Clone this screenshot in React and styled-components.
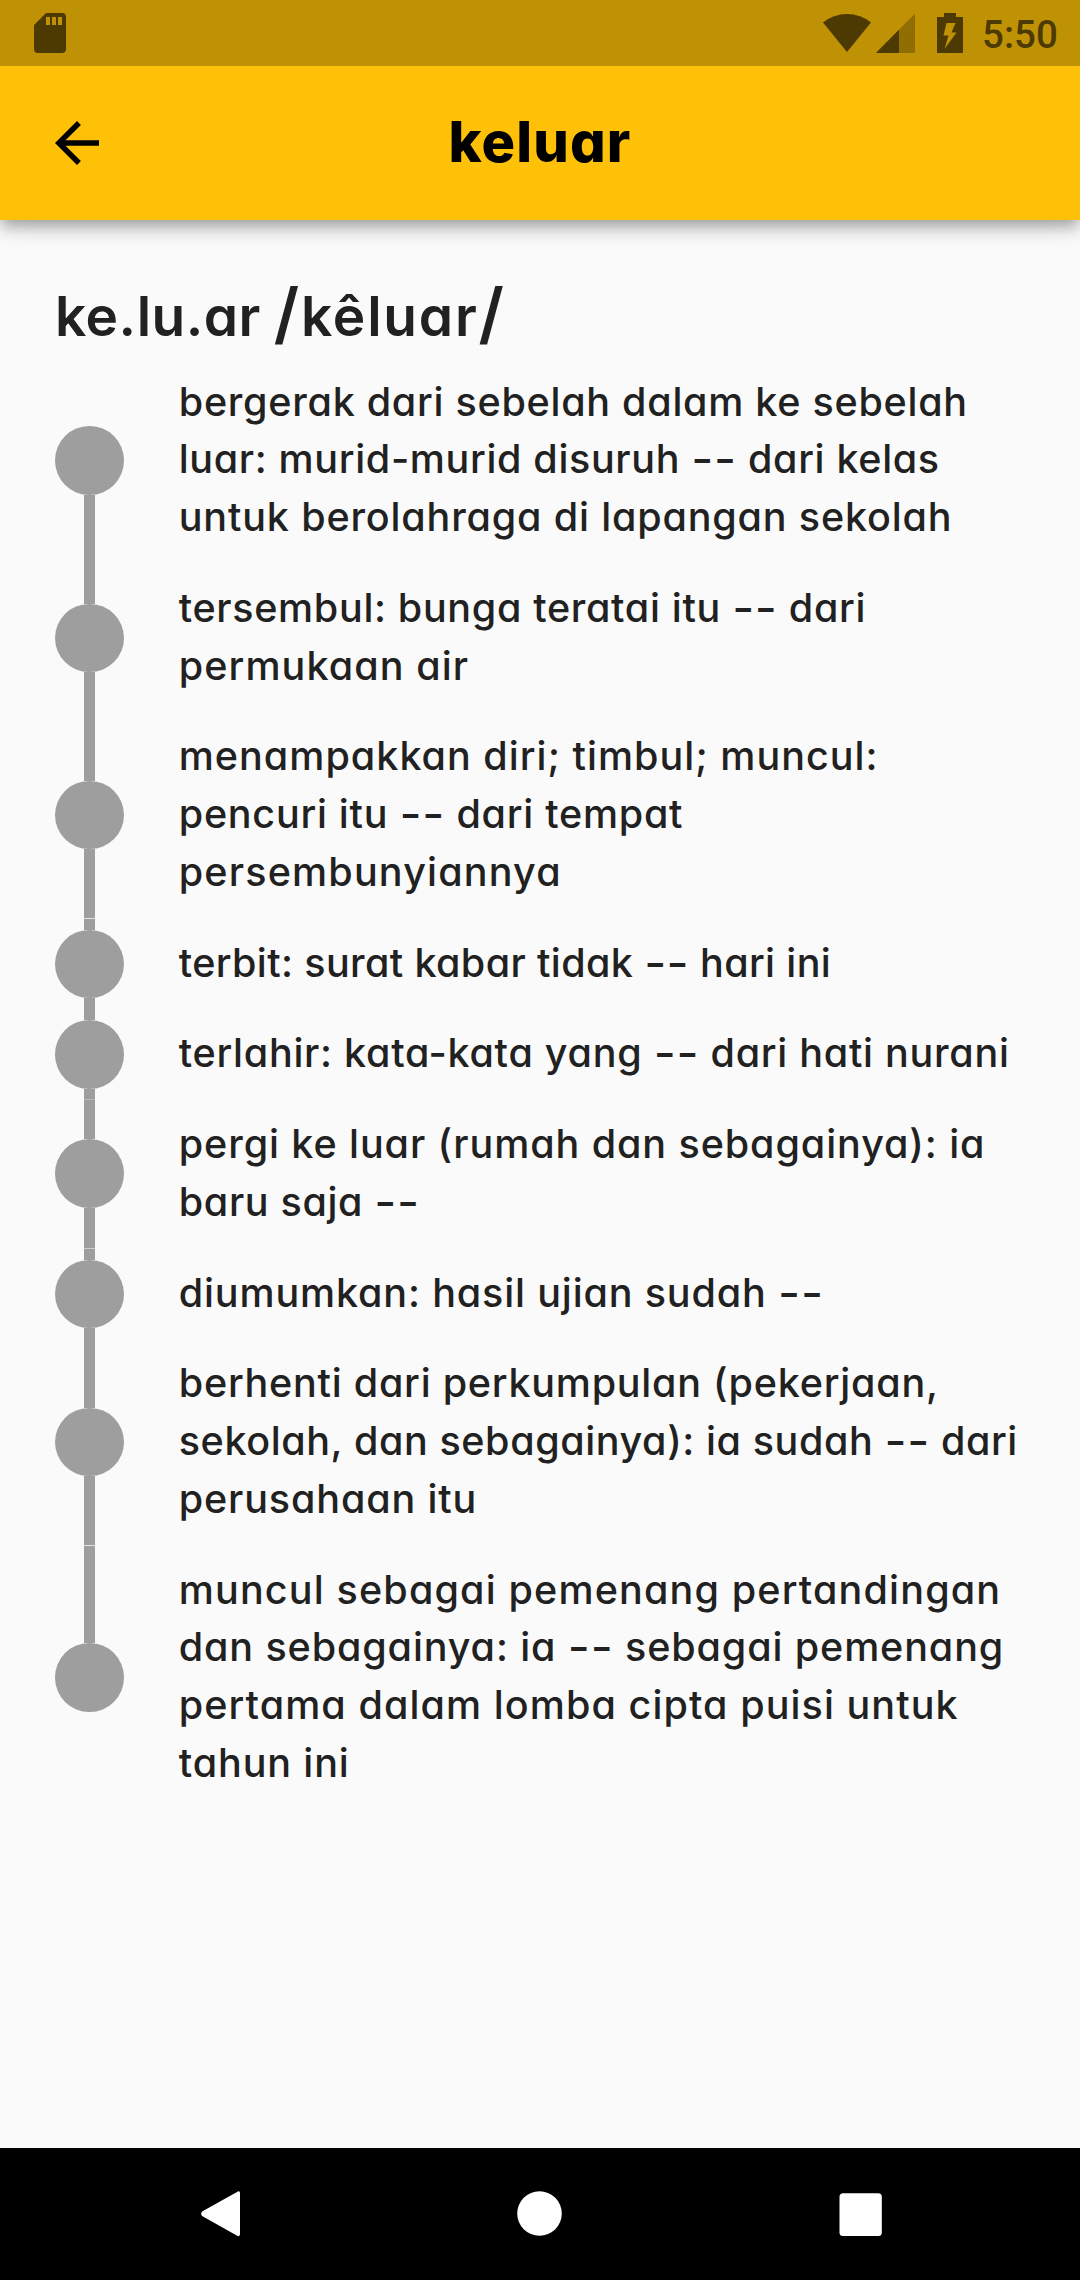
import React from "react";
import styled, { createGlobalStyle } from "styled-components";

const GlobalStyle = createGlobalStyle`
  html, body {
    margin: 0;
    background: #fafafa;
  }
  *, *::before, *::after {
    box-sizing: border-box;
  }
`;

const Screen = styled.div`
  display: flex;
  flex-direction: column;
  width: 1080px;
  height: 2280px;
  overflow: hidden;
  background: #fafafa;
  color: #212121;
  font-family: "Inter", sans-serif;
  font-feature-settings: "cv11";
`;

const StatusBar = styled.div`
  display: flex;
  align-items: center;
  flex: none;
  height: 66px;
  padding: 0 24px 0 26px;
  background: #bf9105;
  color: #4c3a02;
  z-index: 2;
`;

const StatusIcon = styled.svg`
  display: block;
  flex: none;
  width: ${(p) => p.$width}px;
  height: 48px;
  margin-right: ${(p) => p.$gap || 0}px;
  fill: currentColor;
`;

const Spacer = styled.div`
  flex: 1;
`;

const Clock = styled.time`
  font: 500 38.5px/48px Roboto, sans-serif;
  padding-top: 3px;
  width: 74px;
  white-space: nowrap;
`;

const AppBar = styled.header`
  display: grid;
  grid-template-columns: 110px 1fr 110px;
  align-items: center;
  flex: none;
  height: 154px;
  padding: 0 22px;
  background: #ffc107;
  color: #000;
  z-index: 1;
  box-shadow:
    0 5.5px 11px -2.75px rgba(0, 0, 0, 0.2),
    0 11px 13.75px 0 rgba(0, 0, 0, 0.14),
    0 2.75px 27.5px 0 rgba(0, 0, 0, 0.12);
`;

const BackButton = styled.button`
  display: flex;
  align-items: center;
  padding: 0 22px;
  border: 0;
  background: none;
  color: inherit;
`;

const Title = styled.h1`
  margin: -2px 0 0;
  font-size: 56px;
  font-weight: 800;
  line-height: 82.5px;
  letter-spacing: 1.1px;
  text-align: center;
`;

const Content = styled.main`
  flex: 1;
  padding: 55px 55px 0;
`;

const Headword = styled.h2`
  margin: 0;
  height: 82.5px;
  font-size: 55px;
  font-weight: 600;
  line-height: 82.5px;
  letter-spacing: 0.5px;
  word-spacing: -1.5px;
`;

const Pronunciation = styled.span`
  letter-spacing: 1.8px;
`;

const Slash = styled.span`
  font-size: 67px;
  line-height: 0;
  vertical-align: -1px;
`;

const Timeline = styled.ol`
  margin: 0;
  padding: 0;
  list-style: none;
`;

const Entry = styled.li`
  display: flex;
  gap: 55px;
`;

const Rail = styled.div`
  display: flex;
  flex-direction: column;
  align-items: center;
  flex: none;
  width: 68.75px;
`;

const Connector = styled.div`
  flex: 1;
  width: 11px;
  background: ${(p) => (p.$hidden ? "transparent" : "#9e9e9e")};
  border-bottom: ${(p) => (p.$seam ? `1px solid ${p.$seam}` : "0")};
`;

const Dot = styled.div`
  flex: none;
  width: 68.75px;
  height: 68.75px;
  border-radius: 50%;
  background: #9e9e9e;
`;

const Definition = styled.p`
  margin: 0;
  padding: 16px 0 17px;
  font-size: 39.5px;
  font-weight: 500;
  line-height: 57.75px;
`;

const Line = styled.span`
  display: block;
  height: 57.75px;
  white-space: nowrap;
  letter-spacing: ${(p) => p.$tracking}px;
`;

/* The "--" that stands for the headword in an example sentence. */
const Placeholder = styled.span`
  font-size: 48px;
  font-weight: 400;
  line-height: 0;
  vertical-align: -3px;
`;

const NavBar = styled.nav`
  display: flex;
  align-items: center;
  justify-content: space-between;
  flex: none;
  height: 132px;
  padding: 0 187px 0 188px;
  background: #000;
`;

const NavIcon = styled.svg`
  display: block;
  width: 66px;
  height: 66px;
  fill: #fff;
`;

const entries = [
  {
    lines: [
      ["bergerak dari sebelah dalam ke sebelah", 0.733],
      ["luar: murid-murid disuruh -- dari kelas", 0.66],
      ["untuk berolahraga di lapangan sekolah", 0.84],
    ],
  },
  {
    lines: [
      ["tersembul: bunga teratai itu -- dari", 0.67],
      ["permukaan air", 1.09],
    ],
  },
  {
    seam: "#e4e4e4",
    lines: [
      ["menampakkan diri; timbul; muncul:", 1.02],
      ["pencuri itu -- dari tempat", 0.74],
      ["persembunyiannya", 1.18],
    ],
  },
  { lines: [["terbit: surat kabar tidak -- hari ini", 0.38]] },
  {
    seam: "#b6b6b6",
    lines: [["terlahir: kata-kata yang -- dari hati nurani", 0.73]],
  },
  {
    seam: "#cecece",
    lines: [
      ["pergi ke luar (rumah dan sebagainya): ia", 0.92],
      ["baru saja --", 0.66],
    ],
  },
  { lines: [["diumumkan: hasil ujian sudah --", 0.86]] },
  {
    seam: "#e4e4e4",
    lines: [
      ["berhenti dari perkumpulan (pekerjaan,", 0.76],
      ["sekolah, dan sebagainya): ia sudah -- dari", 0.6],
      ["perusahaan itu", 0.86],
    ],
  },
  {
    lines: [
      ["muncul sebagai pemenang pertandingan", 1.16],
      ["dan sebagainya: ia -- sebagai pemenang", 0.88],
      ["pertama dalam lomba cipta puisi untuk", 1.08],
      ["tahun ini", 0.88],
    ],
  },
];

function withPlaceholder(text) {
  const [before, after] = text.split("--");
  if (after === undefined) return text;
  return (
    <>
      {before}
      <Placeholder>--</Placeholder>
      {after}
    </>
  );
}

export default function App() {
  return (
    <Screen>
      <GlobalStyle />
      <StatusBar>
        <StatusIcon $width={48} viewBox="0 0 48 48">
          <path
            fillRule="evenodd"
            d="M20 4h16a4 4 0 0 1 4 4v32a4 4 0 0 1-4 4H12a4 4 0 0 1-4-4V16zM20 8v8h4V8zM26 8v8h4V8zM32 8v8h4V8z"
          />
        </StatusIcon>
        <Spacer />
        <StatusIcon $width={48} $gap={5} viewBox="0 0 48 48">
          <path d="M0 13.5Q10.500 5 24 5T48 13.500L24 43z" />
        </StatusIcon>
        <StatusIcon $width={39} $gap={22} viewBox="0 0 39 48">
          <path opacity="0.4" d="M39 4.500V44H0z" />
          <path d="M23 20.700V44H0z" />
        </StatusIcon>
        <StatusIcon $width={26} $gap={19} viewBox="0 0 26 48">
          <path
            fillRule="evenodd"
            d="M7 4h12v4h7v36H0V8h7zM9.500 14L6.500 26.500h5L7.500 40L19.500 23.500h-5L18.500 14z"
          />
        </StatusIcon>
        <Clock>5:50</Clock>
      </StatusBar>

      <AppBar>
        <BackButton aria-label="Kembali">
          <svg width="66" height="66" viewBox="0 0 24 24" fill="currentColor">
            <path d="M20 11H7.830l5.590-5.590L12 4l-8 8 8 8 1.410-1.410L7.830 13H20v-2z" />
          </svg>
        </BackButton>
        <Title>keluar</Title>
      </AppBar>

      <Content>
        <Headword>
          ke.lu.ar{" "}
          <Pronunciation>
            <Slash>/</Slash>kêluar<Slash>/</Slash>
          </Pronunciation>
        </Headword>
        <Timeline>
          {entries.map((entry, i) => (
            <Entry key={entry.lines[0][0]}>
              <Rail>
                <Connector $hidden={i === 0} />
                <Dot />
                <Connector $hidden={i === entries.length - 1} $seam={entry.seam} />
              </Rail>
              <Definition>
                {entry.lines.map(([text, tracking]) => (
                  <Line key={text} $tracking={tracking}>
                    {withPlaceholder(text)}
                  </Line>
                ))}
              </Definition>
            </Entry>
          ))}
        </Timeline>
      </Content>

      <NavBar>
        <NavIcon viewBox="0 0 66 66">
          <path d="M49.500 10.700C51 9.700 52 10.700 52 12V53C52 55 50.500 55.700 49.200 54.700L14.500 35.300C12.700 34 12.700 31.500 14.500 30.200z" />
        </NavIcon>
        <NavIcon viewBox="0 0 66 66">
          <circle cx="31.500" cy="32.500" r="22.300" />
        </NavIcon>
        <NavIcon viewBox="0 0 66 66">
          <rect x="12.500" y="12.300" width="42.300" height="42.600" rx="3.500" />
        </NavIcon>
      </NavBar>
    </Screen>
  );
}
